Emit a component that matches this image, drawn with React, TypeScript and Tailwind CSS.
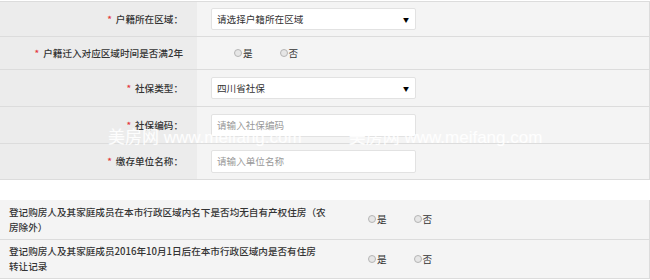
const font = "font-['Microsoft_YaHei','Noto_Sans_CJK_SC','Noto_Sans',sans-serif]"

function Radio({ label }: { label: string }) {
  return (
    <span className="flex items-center">
      <span className="w-[8px] h-[8px] rounded-full border border-[#b5b5b5] bg-[#e6e6e6]" />
      <span className="ml-px">{label}</span>
    </span>
  )
}

function Select({ value }: { value: string }) {
  return (
    <div className="w-[205px] h-[22px] bg-white border border-[#e2e2e2] rounded-[2px] flex items-center justify-between pl-[5px] pr-[6px] text-[#333]">
      <span>{value}</span>
      <span className="text-[6px] text-black">▼</span>
    </div>
  )
}

function Input({ placeholder }: { placeholder: string }) {
  return (
    <div className="w-[205px] h-[23px] bg-white border border-[#e2e2e2] rounded-[2px] flex items-center pl-[5px] text-[#999]">
      {placeholder}
    </div>
  )
}

function Row({ label, colon, height, children, first }: { label: string; colon?: boolean; height: string; children: React.ReactNode; first?: boolean }) {
  return (
    <div className={`flex ${height} border-b border-r border-[#dcdcdc] ${first ? "border-t" : ""}`}>
      <div className="w-[197px] bg-[#ececec] flex items-center justify-end pr-[14px] font-medium text-[#333]">
        <span className="text-[#e4393c] mr-[4px]">*</span>
        {label}
        {colon && <span>：</span>}
      </div>
      <div className="flex-1 bg-[#f4f4f4] flex items-center pl-[14px]">{children}</div>
    </div>
  )
}

function QuestionRow({ height, children }: { height: string; children: React.ReactNode }) {
  return (
    <div className={`flex ${height} bg-[#f4f4f4] border-b border-r border-[#dcdcdc]`}>
      <div className="w-[340px] pl-[9px] flex items-center leading-[15px] font-medium text-[#333]">
        <p>{children}</p>
      </div>
      <div className="flex items-center gap-[27px] pl-[28px] text-[#333]">
        <Radio label="是" />
        <Radio label="否" />
      </div>
    </div>
  )
}

export default function App() {
  return (
    <div className={`relative w-[650px] h-[280px] bg-white pt-px text-[9.6px] ${font}`}>
      <Row first colon label="户籍所在区域" height="h-[36px]">
        <Select value="请选择户籍所在区域" />
      </Row>
      <Row label="户籍迁入对应区域时间是否满2年" height="h-[33px]">
        <div className="flex items-center gap-[27px] pl-[23px] text-[#333]">
          <Radio label="是" />
          <Radio label="否" />
        </div>
      </Row>
      <Row colon label="社保类型" height="h-[37px]">
        <Select value="四川省社保" />
      </Row>
      <Row colon label="社保编码" height="h-[37px]">
        <Input placeholder="请输入社保编码" />
      </Row>
      <Row colon label="缴存单位名称" height="h-[36px]">
        <Input placeholder="请输入单位名称" />
      </Row>

      <div className="mt-[20px]">
        <QuestionRow height="h-[40px]">
          登记购房人及其家庭成员在本市行政区域内名下是否均无自有产权住房（农
          <br />
          房除外）
        </QuestionRow>
        <QuestionRow height="h-[39px]">
          登记购房人及其家庭成员2016年10月1日后在本市行政区域内是否有住房
          <br />
          转让记录
        </QuestionRow>
      </div>

      <div className="absolute left-[108px] top-[127px] flex gap-[47px] font-['Liberation_Sans','Noto_Sans_CJK_SC',sans-serif] text-[17px] leading-[22px] text-white/90 pointer-events-none">
        <span>美房网 www.meifang.com</span>
        <span>美房网 www.meifang.com</span>
      </div>
    </div>
  )
}
